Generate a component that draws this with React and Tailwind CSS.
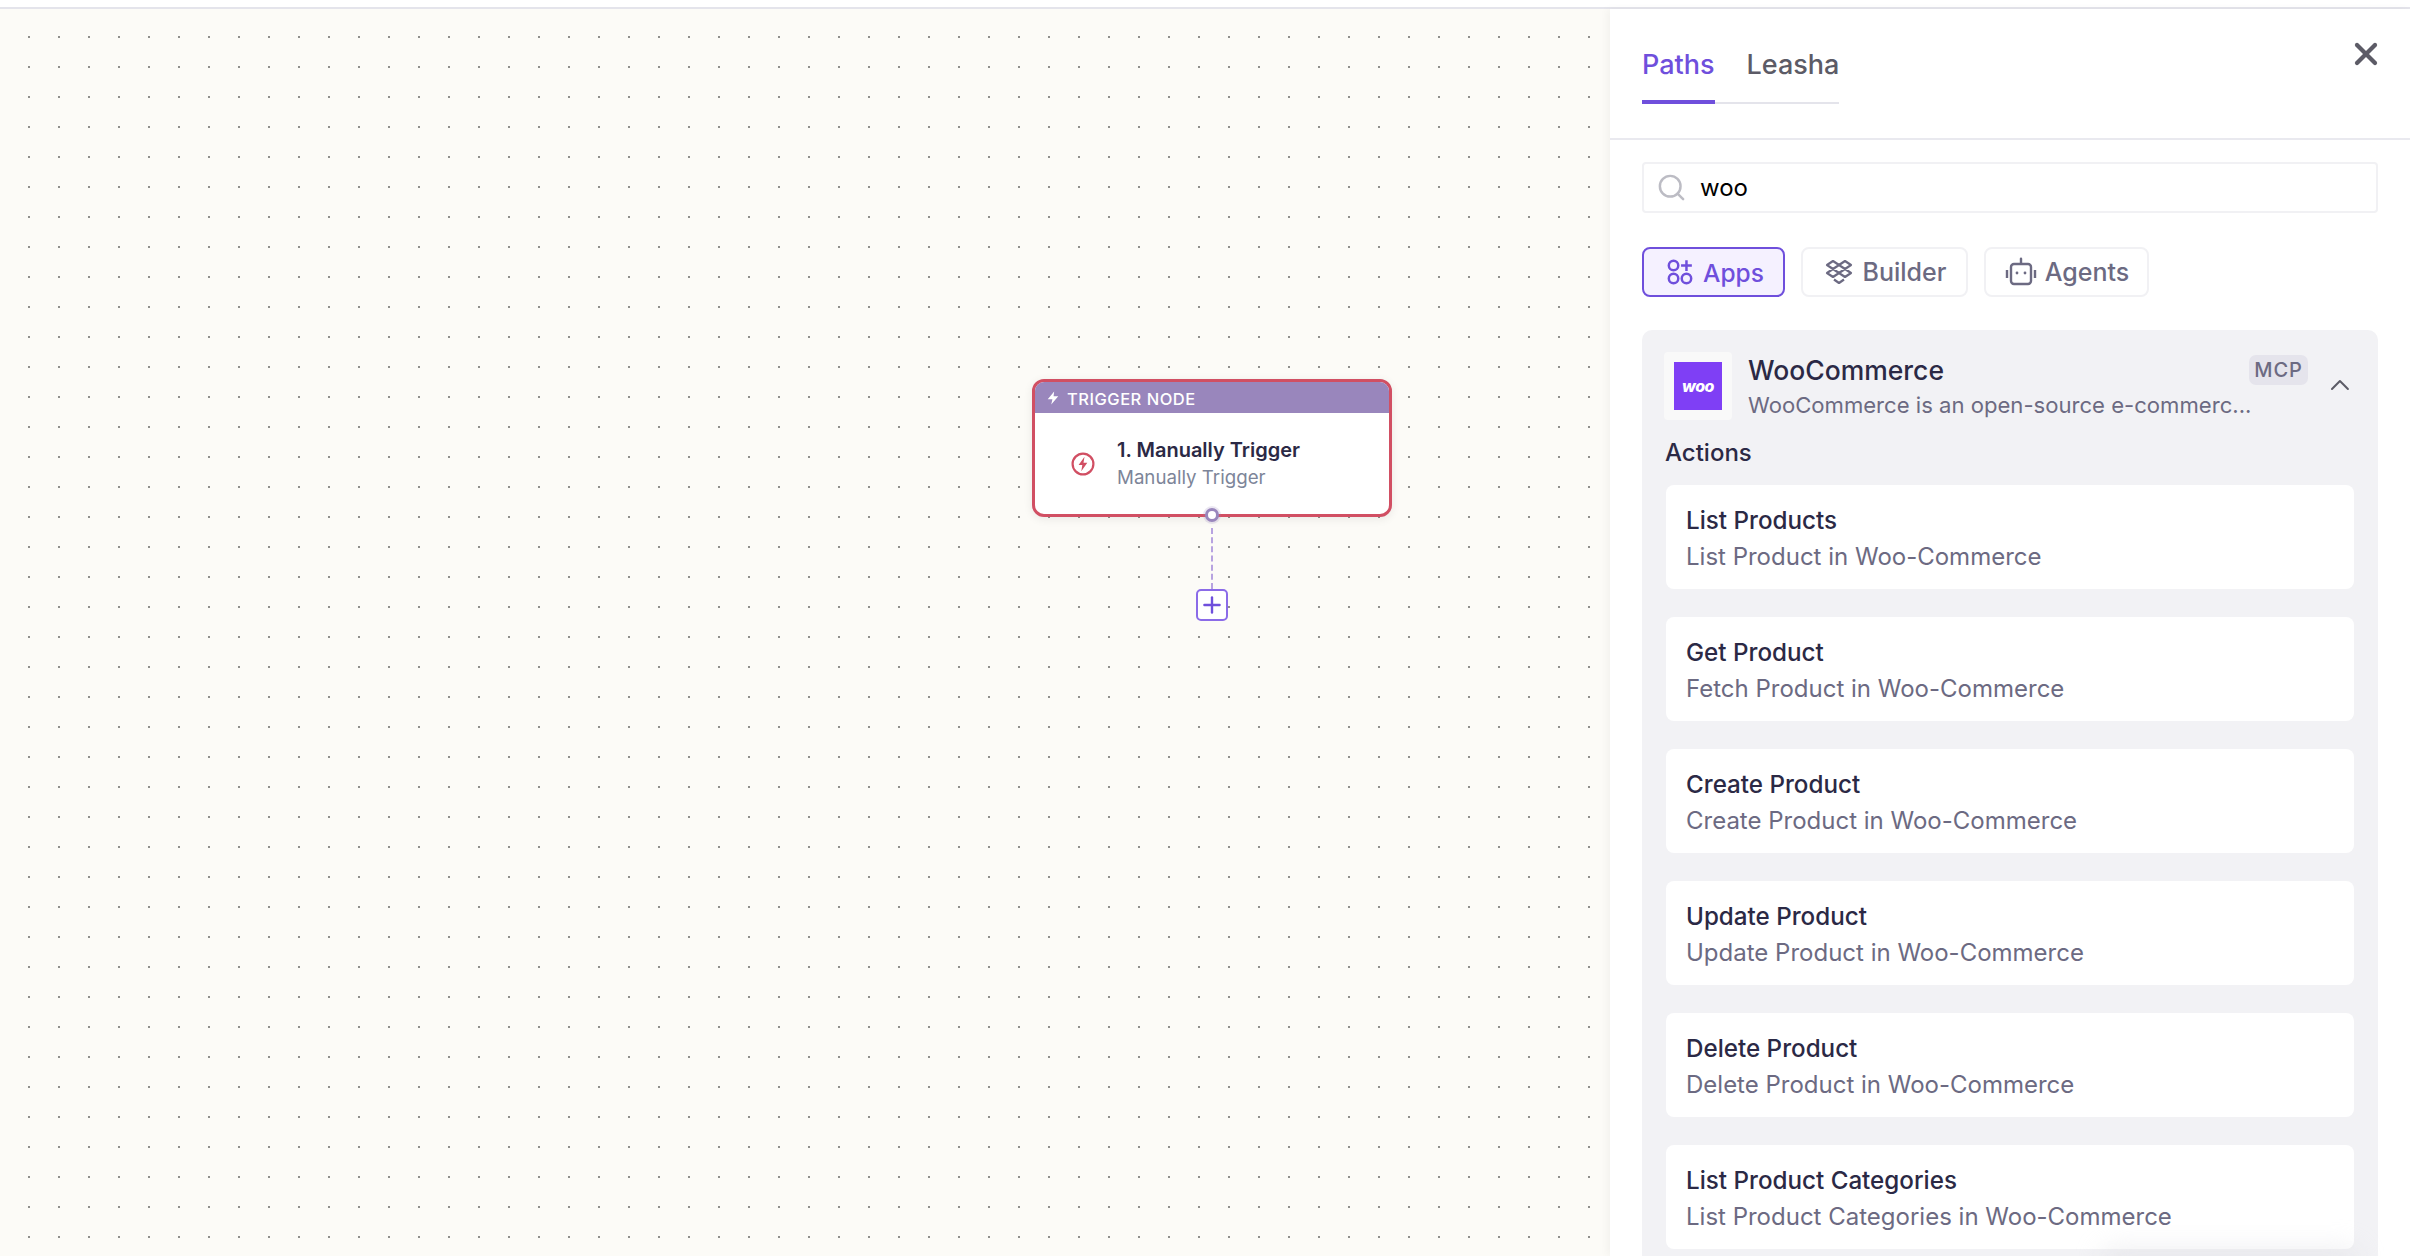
import React from 'react';
import { ChevronUp, Search, X, Plus } from 'lucide-react';

const actions = [
  ['List Products', 'List Product in Woo-Commerce'],
  ['Get Product', 'Fetch Product in Woo-Commerce'],
  ['Create Product', 'Create Product in Woo-Commerce'],
  ['Update Product', 'Update Product in Woo-Commerce'],
  ['Delete Product', 'Delete Product in Woo-Commerce'],
  ['List Product Categories', 'List Product Categories in Woo-Commerce'],
];

function AppsIcon() {
  return (
    <svg width="28" height="28" viewBox="0 0 26 26" fill="none" stroke="currentColor" strokeWidth="2.300">
      <circle cx="7" cy="7" r="4.400" />
      <circle cx="7" cy="19" r="4.400" />
      <circle cx="19" cy="19" r="4.400" />
      <path d="M19 2v10M14 7h10" />
    </svg>
  );
}

function BuilderIcon() {
  return (
    <svg width="28" height="26" viewBox="0 0 28 26" fill="none" stroke="currentColor" strokeWidth="2.200" strokeLinejoin="round">
      <path d="M8 2 14 6 8 10 2 6zM20 2l6 4-6 4-6-4zM8 10l6 4-6 4-6-4zM20 10l6 4-6 4-6-4z" />
      <path d="M9 20.500 14 24l5-3.500" />
    </svg>
  );
}

function RobotIcon() {
  return (
    <svg width="32" height="30" viewBox="0 0 32 30" fill="none" stroke="currentColor" strokeWidth="2.400">
      <rect x="6" y="7" width="20" height="20" rx="3" />
      <path d="M16 7V2M2 13v8M30 13v8" />
      <circle cx="16" cy="1.800" r="1.200" fill="currentColor" stroke="none" />
      <circle cx="12" cy="16" r="1.400" fill="currentColor" stroke="none" />
      <circle cx="20" cy="16" r="1.400" fill="currentColor" stroke="none" />
    </svg>
  );
}

function TriggerNode() {
  return (
    <div className="absolute left-[1032px] top-[370px] w-[360px]">
      <div className="h-[138px] rounded-[12px] border-[3px] border-[#d14f63] bg-white overflow-hidden shadow-[0_2px_10px_rgba(0,0,0,0.08)]">
        <div className="h-[31px] bg-[#9986bc] flex items-center pl-[11px] gap-[7px] pt-[3px] text-white text-[16.5px] font-medium tracking-[0.5px]">
          <svg width="14" height="14" viewBox="0 0 24 24" fill="#fff" className="-mt-[3px]"><path d="M14 1 3 14h8l-2 9 12-14h-8z" /></svg>
          TRIGGER NODE
        </div>
        <div className="flex items-center pl-[36px] h-[101px]">
          <svg width="24" height="24" viewBox="0 0 24 24" fill="none" className="shrink-0">
            <circle cx="12" cy="12" r="10.400" stroke="#d14f63" strokeWidth="2.200" />
            <path d="M13.500 4.800 7.600 13h3.700l-1 6.200 6-8.400h-3.800z" fill="#d14f63" />
          </svg>
          <div className="ml-[22px]">
            <div className="text-[20px] leading-[28px] font-semibold text-[#2b2945]">1. Manually Trigger</div>
            <div className="text-[18.7px] leading-[28px] text-[#7d8599]">Manually Trigger</div>
          </div>
        </div>
      </div>
      {/* handle + connector */}
      <div className="absolute left-[173px] top-[129px] w-[14px] h-[14px] rounded-full border-[3px] border-[#9986bc] bg-white shadow-[0_0_0_2px_rgba(153,134,188,0.2)]" />
      <div className="absolute left-[179px] top-[149px] h-[61px] border-l-2 border-dashed border-[#b7a3e0]" />
      <div className="absolute left-[164px] top-[210px] w-[32px] h-[32px] rounded-[5px] border-2 border-[#8b6be8] bg-white flex items-center justify-center text-[#6f4fdc]">
        <Plus size={26} strokeWidth={2.200} />
      </div>
    </div>
  );
}

export default function App() {
  return (
    <div className="h-[1256px] overflow-hidden flex flex-col bg-white font-['Inter',sans-serif]">
      <div className="h-[9px] shrink-0 border-b-2 border-[#e4e4eb] bg-white" />
      <div className="flex flex-1 min-h-0">
        {/* canvas */}
        <div className="relative w-[1610px] bg-[#fcfbf7] bg-[radial-gradient(circle,#8f8f8c_1.1px,transparent_1.3px)] bg-[size:30px_30px] bg-[position:14px_13px]">
          <TriggerNode />
        </div>

        {/* right panel */}
        <div className="w-[800px] bg-white shadow-[-3px_0_8px_rgba(0,0,0,0.04)] relative flex flex-col">
          <div className="h-[131px] shrink-0 border-b-2 border-[#e9e9ef] flex justify-between items-start pl-[32px] pr-[26px]">
            <div className="flex gap-[32px] border-b-2 border-[#e4e4eb] mt-[38px] text-[27px] leading-[36px] font-medium">
              <div className="text-[#6f4fdc] h-[57px] border-b-4 border-[#6f4fdc] -mb-[2px]">Paths</div>
              <div className="text-[#5c5b66]">Leasha</div>
            </div>
            <X size={36} strokeWidth={2.800} className="text-[#5c5b66] mt-[27px]" />
          </div>

          <div className="px-[32px] flex-1 min-h-0">
            <div className="mt-[22px] h-[51px] border-2 border-[#f1f1f4] rounded-[4px] flex items-center pl-[12px] gap-[13px]">
              <Search size={31} strokeWidth={1.900} className="text-[#bcbcc4]" />
              <span className="text-[24px] text-black">woo</span>
            </div>

            <div className="mt-[34px] flex gap-[16px] text-[25px] font-medium">
              <div className="h-[50px] w-[143px] pl-[3px] rounded-[8px] border-2 border-[#6f4fdc] bg-[#f5f1ff] text-[#6f4fdc] flex items-center justify-center gap-[9px]">
                <AppsIcon />
                <span className="pt-[2px] text-[24.5px]">Apps</span>
              </div>
              <div className="h-[50px] w-[167px] pl-[2px] rounded-[8px] border-2 border-[#f1f1f4] text-[#6c6a82] flex items-center justify-center gap-[10px]">
                <BuilderIcon />
                <span className="pt-[2px]">Builder</span>
              </div>
              <div className="h-[50px] w-[165px] pl-[1px] rounded-[8px] border-2 border-[#f1f1f4] text-[#6c6a82] flex items-center justify-center gap-[8px]">
                <RobotIcon />
                <span className="pt-[2px]">Agents</span>
              </div>
            </div>

            <div className="mt-[33px] bg-[#f2f2f5] rounded-[10px] pt-[22px] px-[22px] pb-[40px]">
              <div className="flex items-center">
                <div className="w-[68px] h-[68px] shrink-0 bg-[#f9f9f9] rounded-[4px] flex items-center justify-center">
                  <div className="w-[48px] h-[48px] bg-[#7f3ff5] flex items-center justify-center text-white text-[16px] font-extrabold italic tracking-[-0.5px]">woo</div>
                </div>
                <div className="ml-[16px] w-[500px] h-[68px] -mt-[1px]">
                  <div className="text-[26.500px] leading-[36px] font-medium text-[#2b2945]">WooCommerce</div>
                  <div className="text-[22.100px] leading-[34px] text-[#6c6a82] whitespace-nowrap">WooCommerce is an open-source e-commerc...</div>
                </div>
                <div className="self-start mt-[3px] ml-[1px] h-[30px] w-[63px] rounded-[7px] bg-[#e5e4ec] text-[#6c6a82] text-[20px] font-medium flex items-center justify-center tracking-[1px]">MCP</div>
                <ChevronUp size={34} strokeWidth={1.500} className="ml-[16px] -mt-[2px] text-[#5c5b66]" />
              </div>
              <div className="mt-[15px] ml-[1px] text-[24px] leading-[36px] font-medium text-[#2b2945]">Actions</div>
              <div className="mt-[14px] flex flex-col gap-[28px] mx-[2px]">
                {actions.map(([title, sub]) => (
                  <div key={title} className="h-[104px] shrink-0 bg-white rounded-[8px] pl-[20px] pt-[18px]">
                    <div className="text-[24.2px] leading-[36px] font-medium text-[#2b2945]">{title}</div>
                    <div className="text-[24px] leading-[36px] text-[#6c6a82]">{sub}</div>
                  </div>
                ))}
              </div>
            </div>
          </div>
          {/* faint shade at the bottom edge */}
          <div className="absolute -bottom-[24px] right-[50px] w-[260px] h-[34px] rounded-full bg-[#dcdce2]/40 blur-md" />
        </div>
      </div>
    </div>
  );
}
